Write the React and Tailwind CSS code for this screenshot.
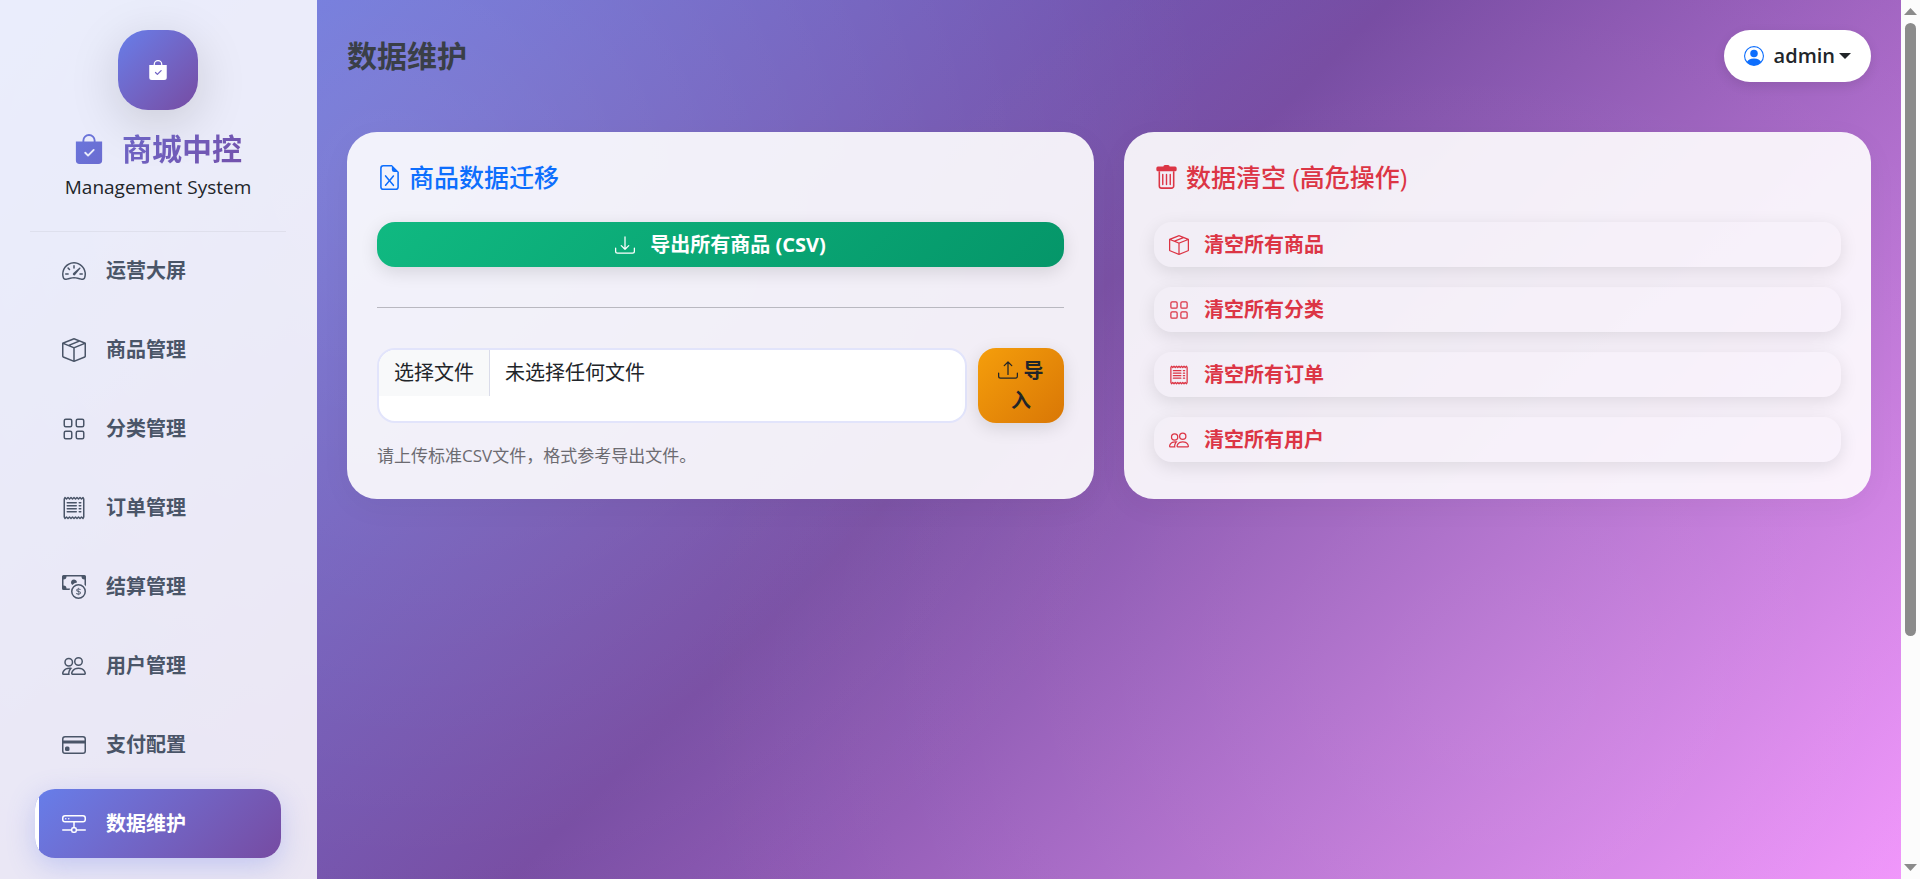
import React from 'react'
import {
  BsBagCheckFill,
  BsBoxSeam,
  BsCashCoin,
  BsCreditCard,
  BsDownload,
  BsFileEarmarkExcel,
  BsGrid,
  BsHddNetwork,
  BsPeople,
  BsPersonCircle,
  BsReceipt,
  BsSpeedometer2,
  BsUpload,
} from 'react-icons/bs'

const navItems = [
  { label: '运营大屏', icon: BsSpeedometer2 },
  { label: '商品管理', icon: BsBoxSeam },
  { label: '分类管理', icon: BsGrid },
  { label: '订单管理', icon: BsReceipt },
  { label: '结算管理', icon: BsCashCoin },
  { label: '用户管理', icon: BsPeople },
  { label: '支付配置', icon: BsCreditCard },
  { label: '数据维护', icon: BsHddNetwork, active: true },
]

const clearActions = [
  { label: '清空所有商品', icon: BsBoxSeam },
  { label: '清空所有分类', icon: BsGrid },
  { label: '清空所有订单', icon: BsReceipt },
  { label: '清空所有用户', icon: BsPeople },
]

// trash can with a solid lid
const TrashIcon = ({ className }) => (
  <svg viewBox="0 0 16 16" className={className} fill="currentColor">
    <path d="M10 1a1 1 0 0 0-1-1H7a1 1 0 0 0-1 1H2.500a1 1 0 0 0-1 1v1a1 1 0 0 0 1 1h11a1 1 0 0 0 1-1V2a1 1 0 0 0-1-1z" />
    <path
      d="M3.400 4v9.400a1.400 1.400 0 0 0 1.400 1.400h6.400a1.400 1.400 0 0 0 1.400-1.400V4"
      fill="none"
      stroke="currentColor"
    />
    <path
      d="M5.600 6v6.500M8 6v6.500M10.400 6v6.500"
      fill="none"
      stroke="currentColor"
      strokeWidth="0.900"
      strokeLinecap="round"
    />
  </svg>
)

const NavLink = ({ label, icon: Icon, active }) => (
  <a
    href="#"
    aria-current={active ? 'page' : undefined}
    className={
      active
        ? 'relative flex h-[69px] items-center gap-5 overflow-hidden rounded-[20px] bg-linear-135 from-[#667eea] to-[#764ba2] pl-[27px] font-bold text-white shadow-[0_8px_28px_rgba(102,126,234,0.3)] before:absolute before:inset-y-0 before:left-0 before:w-1 before:bg-white'
        : 'flex h-[69px] items-center gap-5 rounded-[20px] pl-[27px] font-semibold text-[#4a5568]'
    }
  >
    <Icon className="size-6 shrink-0" />
    <span>{label}</span>
  </a>
)

const Sidebar = () => (
  <aside className="h-full w-[317px] shrink-0 overflow-hidden bg-white/85">
    <div className="mr-[31px] ml-[30px] flex flex-col items-center border-b border-black/5 pt-[30px] pb-[29px]">
      <div className="flex size-20 items-center justify-center rounded-[30px] bg-linear-135 from-[#667eea] to-[#764ba2] text-white shadow-[0_12px_50px_rgba(0,0,0,0.15)]">
        <BsBagCheckFill className="size-5" />
      </div>
      <h1 className="mt-[21px] flex w-full items-center justify-center text-3xl leading-9 font-bold">
        <svg width="0" height="0" className="absolute">
          <linearGradient id="brand" x1="0" y1="0" x2="1" y2="1">
            <stop offset="0" stopColor="#6a76dc" />
            <stop offset="1" stopColor="#6b6cd0" />
          </linearGradient>
        </svg>
        <BsBagCheckFill className="mr-[18px] size-[30px]" fill="url(#brand)" />
        <span className="bg-linear-135 from-[#6d66c6] to-[#7351ac] bg-clip-text text-transparent">
          商城中控
        </span>
      </h1>
      <p className="mt-[5px] text-[19px] leading-[30px] text-[#212529]">
        Management System
      </p>
    </div>
    <nav className="mr-9 ml-[35px] flex flex-col gap-[10px] pt-1">
      {navItems.map((item) => (
        <NavLink key={item.label} {...item} />
      ))}
    </nav>
  </aside>
)

const Header = () => (
  <header className="flex h-[52px] items-center justify-between">
    <h2 className="text-3xl font-semibold text-[#3a3f47]">数据维护</h2>
    <button
      type="button"
      className="flex h-[52px] items-center rounded-full bg-white px-5 font-semibold text-[#212529] shadow-[0_4px_12px_rgba(0,0,0,0.1)]"
    >
      <BsPersonCircle className="mr-[10px] size-5 text-[#0d6efd]" />
      admin
      <svg viewBox="0 0 12 6" className="ml-1 w-3" fill="currentColor">
        <path d="M0 0h12L6 6z" />
      </svg>
    </button>
  </header>
)

const MigrationCard = () => (
  <section className="rounded-[30px] bg-white/90 px-[30px] pt-[30px] pb-[27px] shadow-[0_8px_32px_rgba(0,0,0,0.04)]">
    <h3 className="flex items-center gap-[7px] text-[25px] leading-[30px] font-medium text-[#0d6efd]">
      <BsFileEarmarkExcel className="size-[25px]" />
      商品数据迁移
    </h3>
    <button
      type="button"
      className="mt-[30px] flex h-[45px] w-full items-center justify-center gap-[15px] rounded-[18px] bg-linear-135 from-[#10b981] to-[#059669] font-bold text-white shadow-[0_5px_18px_rgba(0,0,0,0.12)]"
    >
      <BsDownload className="size-5" />
      导出所有商品 (CSV)
    </button>
    <hr className="my-10 border-[#b9b8c0]" />
    <form className="flex gap-[11px]">
      <label
        htmlFor="csv-file"
        className="flex h-[75px] flex-1 items-start overflow-hidden rounded-[18px] border-2 border-[#e2e4fb] bg-white text-[#212529]"
      >
        <span className="border-r border-[#dadcea] bg-[#f8f9fa] px-[15px] py-2 leading-[30px]">
          选择文件
        </span>
        <span className="px-[15px] py-2 leading-[30px]">未选择任何文件</span>
        <input id="csv-file" type="file" accept=".csv" className="sr-only" />
      </label>
      <button
        type="button"
        className="h-[75px] w-[86px] rounded-[18px] bg-linear-135 from-[#f59e0b] to-[#d97706] px-5 leading-[30px] font-semibold text-[#212529] shadow-[0_5px_18px_rgba(0,0,0,0.12)]"
      >
        <BsUpload className="inline size-5 align-[-2px]" /> 导入
      </button>
    </form>
    <p className="mt-5 text-[17px] leading-[26px] text-[#6c6b71]">
      请上传标准CSV文件，格式参考导出文件。
    </p>
  </section>
)

const ClearCard = () => (
  <section className="rounded-[30px] bg-white/90 px-[30px] pt-[30px] pb-[37px] shadow-[0_8px_32px_rgba(0,0,0,0.04)]">
    <h3 className="flex items-center gap-[7px] text-[25px] leading-[30px] font-medium text-[#dc3545]">
      <TrashIcon className="size-[25px]" />
      数据清空 (高危操作)
    </h3>
    <div className="mt-[30px] flex flex-col gap-5">
      {clearActions.map(({ label, icon: Icon }) => (
        <button
          key={label}
          type="button"
          className="flex h-[45px] items-center gap-[15px] rounded-[18px] px-[15px] font-semibold text-[#dc3545] shadow-[0_5px_18px_rgba(0,0,0,0.1)]"
        >
          <Icon className="size-5" />
          {label}
        </button>
      ))}
    </div>
  </section>
)

const ScrollTrack = () => (
  <div className="flex w-[19px] shrink-0 flex-col items-center bg-[#fcfcfc] py-2 text-[#8b8b8b]">
    <svg viewBox="0 0 13 7" className="w-[13px]" fill="currentColor">
      <path d="M6.500 0L13 7H0z" />
    </svg>
    <div className="mt-2 h-[71%] w-[11px] rounded-full bg-[#8b8b8b]" />
    <svg viewBox="0 0 13 7" className="mt-auto w-[13px]" fill="currentColor">
      <path d="M0 0h13L6.500 7z" />
    </svg>
  </div>
)

export default function App() {
  return (
    <div
      lang="zh-CN"
      className="flex h-screen overflow-hidden font-['Open_Sans','Noto_Sans_CJK_SC',sans-serif] text-xl"
    >
      <div className="flex min-w-0 flex-1 bg-[radial-gradient(circle_at_20%_20%,rgba(255,255,255,0.13)_0%,transparent_50%),radial-gradient(circle_at_80%_80%,rgba(255,255,255,0.08)_0%,transparent_50%),linear-gradient(135deg,#667eea_0%,#764ba2_50%,#f093fb_100%)]">
        <Sidebar />
        <main className="min-w-0 flex-1 p-[30px]">
          <Header />
          <div className="mt-[50px] grid grid-cols-2 gap-[30px]">
            <MigrationCard />
            <ClearCard />
          </div>
        </main>
      </div>
      <ScrollTrack />
    </div>
  )
}
